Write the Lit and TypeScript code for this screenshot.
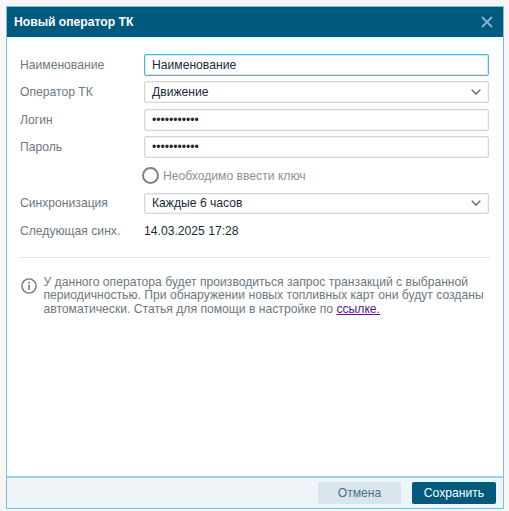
import { LitElement, html, css } from "lit";
import { customElement } from "lit/decorators.js";

const chevron = html`<svg class="chev" width="10" height="6" viewBox="0 0 10 6"><path d="M0.7 0.8 L5 5 L9.3 0.8" fill="none" stroke="#5f6b75" stroke-width="1.5"/></svg>`;

@customElement("app-root")
export class AppRoot extends LitElement {
  static styles = css`
    :host { display: block; width: 509px; height: 511px; background: #f6f6f6; font-family: "Liberation Sans", Arial, sans-serif; font-size: 12.15px; color: #1c2b36; padding: 6px 5px 2px 6px; box-sizing: border-box; }
    .modal { height: 503px; box-sizing: border-box; border: 1px solid #7cc0dd; background: #fff; display: flex; flex-direction: column; }
    .head { height: 30px; background: #005a7e; display: flex; align-items: center; justify-content: space-between; padding: 0 10px 0 7px; flex: none; }
    .title { color: #fff; font-weight: 700; }
    .body { flex: 1; padding: 17px 13px 0 13px; display: flex; flex-direction: column; }
    .row { display: grid; grid-template-columns: 124px 345px; align-items: center; height: 21.7px; margin-bottom: 5.8px; }
    .label { color: #6d7780; }
    .field { height: 21.7px; box-sizing: border-box; border: 1px solid #d6d6d6; border-radius: 2px; display: flex; align-items: center; justify-content: space-between; padding: 0 7px; background: #fff; color: #1c2b36; box-shadow: inset 0 0 0 0.5px #e6e6e6; }
    .focus { border-color: #5aaed2; box-shadow: inset 0 0 0 0.5px #a9d5e8; }
    .check { display: flex; align-items: center; gap: 4px; margin: 2px 0 0 122px; height: 20px; color: #8b9198; }
    .circle { width: 13px; height: 13px; border: 2px solid #7f8286; border-radius: 50%; flex: none; }
    .sync { margin-top: 6.6px; }
    .next { margin-bottom: 0; }
    .value { color: #1c2b36; }
    .divider { height: 1px; background: #e4e4e4; margin: 15px 0 18px; }
    .info { display: flex; gap: 7px; color: #6d7780; line-height: 13.5px; }
    .info svg { flex: none; margin: 2px 0 0 0.5px; }
    a { color: #551a8b; text-decoration: underline; }
    .foot { height: 32px; flex: none; background: #eef4f8; border-top: 2px solid #9fd0e6; display: flex; align-items: center; justify-content: flex-end; gap: 11px; padding: 0 7px 0 0; box-sizing: border-box; }
    .btn { height: 21.7px; display: flex; align-items: center; justify-content: center; border-radius: 2px; }
    .cancel { width: 83px; background: #d9e5ec; color: #4a7184; }
    .save { width: 84px; background: #005a7e; color: #fff; }
  `;

  render() {
    return html`
      <div class="modal">
        <div class="head">
          <span class="title">Новый оператор ТК</span>
          <svg width="12" height="12" viewBox="0 0 12 12"><path d="M1 1 L11 11 M11 1 L1 11" stroke="#7fb6cd" stroke-width="2" fill="none"/></svg>
        </div>
        <div class="body">
          <div class="row"><span class="label">Наименование</span><div class="field focus">Наименование</div></div>
          <div class="row"><span class="label">Оператор ТК</span><div class="field">Движение${chevron}</div></div>
          <div class="row"><span class="label">Логин</span><div class="field"><span>•••••••••••</span></div></div>
          <div class="row"><span class="label">Пароль</span><div class="field"><span>•••••••••••</span></div></div>
          <div class="check"><span class="circle"></span>Необходимо ввести ключ</div>
          <div class="row sync"><span class="label">Синхронизация</span><div class="field">Каждые 6 часов${chevron}</div></div>
          <div class="row next"><span class="label">Следующая синх.</span><span class="value">14.03.2025 17:28</span></div>
          <div class="divider"></div>
          <div class="info">
            <svg width="16" height="16" viewBox="0 0 16 16"><circle cx="8" cy="8" r="7.1" fill="none" stroke="#6f7479" stroke-width="1.4"/><rect x="7.2" y="6.8" width="1.6" height="5" fill="#6f7479"/><rect x="7.2" y="3.9" width="1.6" height="1.7" fill="#6f7479"/></svg>
            <div>У данного оператора будет производиться запрос транзакций с выбранной периодичностью. При обнаружении новых топливных карт они будут созданы автоматически. Статья для помощи в настройке по <a href="#">ссылке.</a></div>
          </div>
        </div>
        <div class="foot">
          <div class="btn cancel">Отмена</div>
          <div class="btn save">Сохранить</div>
        </div>
      </div>
    `;
  }
}
